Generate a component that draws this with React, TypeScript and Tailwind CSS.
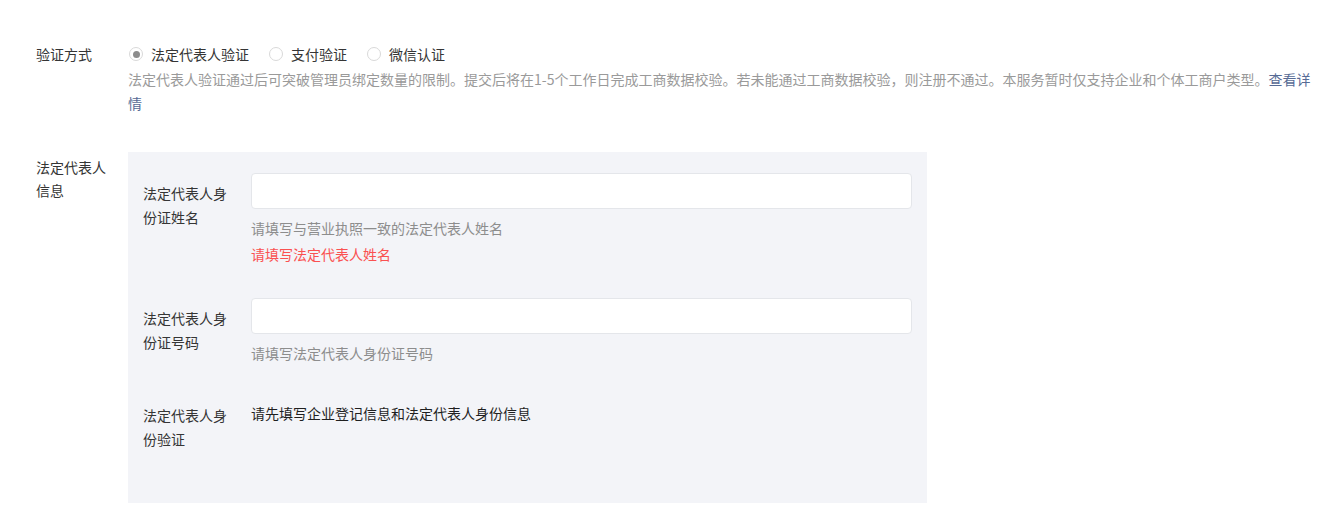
const FONT = { fontFamily: '"Noto Sans CJK SC", "Noto Sans", sans-serif' };

const METHODS = [
  { label: "法定代表人验证", checked: true },
  { label: "支付验证", checked: false },
  { label: "微信认证", checked: false },
];

function Radio({ checked }: { checked: boolean }) {
  return (
    <span className="ml-[1px] flex h-[14px] w-[14px] shrink-0 items-center justify-center rounded-full border border-[#d9d9d9] bg-white">
      {checked && <span className="h-[7px] w-[7px] rounded-full bg-[#8c8c8c]" />}
    </span>
  );
}

function Field({ label, hint, error }: { label: string; hint: string; error?: string }) {
  return (
    <div className="flex">
      <div className="w-[108px] shrink-0 pr-[12px] pt-[8px] text-[#353535]">{label}</div>
      <div className="flex-1">
        <input className="block h-[36px] w-full rounded-[4px] border border-[#e4e6ea] bg-white px-3 outline-none" />
        <div className="mt-[7px] text-[#8d8d8d]">{hint}</div>
        {error && <div className="mt-[2px] text-[#fa5151]">{error}</div>}
      </div>
    </div>
  );
}

export default function App() {
  return (
    <div style={FONT} className="min-h-[521px] bg-white pl-[36px] pr-[10px] pt-[42px] text-[14px] leading-[24px] text-[#353535]">
      <div className="flex">
        <div className="w-[80px] shrink-0 mr-[12px]">验证方式</div>
        <div className="flex-1">
          <div className="flex items-center gap-[19px]">
            {METHODS.map((m) => (
              <label key={m.label} className="flex items-center gap-[8px] cursor-pointer">
                <Radio checked={m.checked} />
                <span>{m.label}</span>
              </label>
            ))}
          </div>
          <p className="mt-[1px] text-[#9a9a9a]">
            法定代表人验证通过后可突破管理员绑定数量的限制。提交后将在1-5个工作日完成工商数据校验。若未能通过工商数据校验，则注册不通过。本服务暂时仅支持企业和个体工商户类型。<a className="text-[#576b95] cursor-pointer">查看详情</a>
          </p>
        </div>
      </div>

      <div className="mt-[37px] flex">
        <div className="w-[80px] shrink-0 mr-[12px] pt-[4px] leading-[23px]">法定代表人信息</div>
        <div className="w-[799px] bg-[#f3f4f8] px-[15px] pt-[21px] pb-[52px]">
          <Field label="法定代表人身份证姓名" hint="请填写与营业执照一致的法定代表人姓名" error="请填写法定代表人姓名" />
          <div className="mt-[32px]">
            <Field label="法定代表人身份证号码" hint="请填写法定代表人身份证号码" />
          </div>
          <div className="mt-[31px] flex">
            <div className="w-[108px] shrink-0 pr-[12px] pt-[7px]">法定代表人身份验证</div>
            <div className="flex-1 pt-[5px] text-[#1f1f1f]">请先填写企业登记信息和法定代表人身份信息</div>
          </div>
        </div>
      </div>
    </div>
  );
}
